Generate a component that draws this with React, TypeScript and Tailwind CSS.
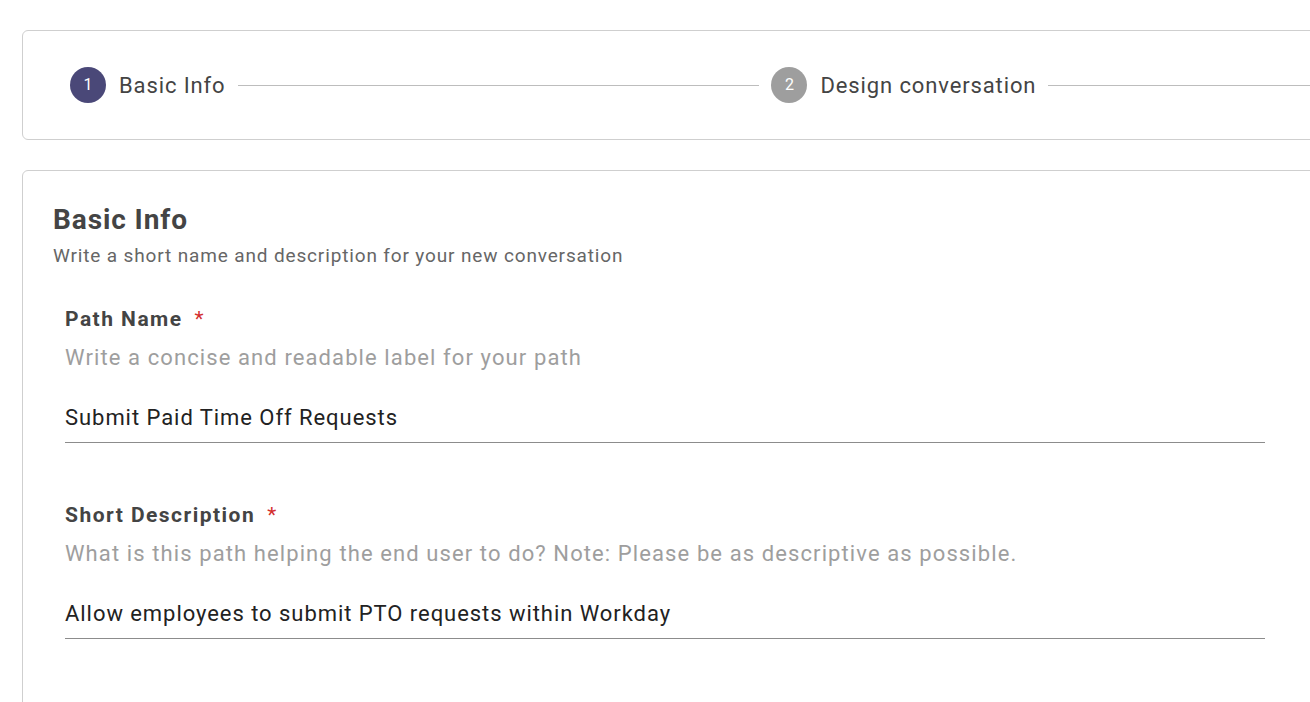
const font = { fontFamily: 'Roboto, "Liberation Sans", sans-serif' };

function Step({ n, label, active }: { n: number; label: string; active?: boolean }) {
  return (
    <div className="flex items-center shrink-0">
      <div
        className={`w-9 h-9 rounded-full flex items-center justify-center text-[16px] text-white ${
          active ? 'bg-[#4a4878]' : 'bg-[#9e9e9e]'
        }`}
      >
        {n}
      </div>
      <span className="ml-[13px] text-[22px] tracking-[0.04em] text-[#444444]">{label}</span>
    </div>
  );
}

function Field({ label, hint, value }: { label: string; hint: string; value: string }) {
  return (
    <div className="pl-3 w-[1212px]">
      <div className="flex items-center text-[21px] leading-[28px] font-bold tracking-[0.07em] text-[#444444]">
        {label}
        <span className="ml-3 text-[#d32f2f] font-normal">*</span>
      </div>
      <div className="mt-[11px] text-[22px] leading-[28px] tracking-[0.05em] text-[#9e9e9e]">{hint}</div>
      <div className="mt-8 pb-[10px] border-b border-[#8c8c8c] text-[22px] leading-[28px] tracking-[0.043em] text-[#222222]">
        {value}
      </div>
    </div>
  );
}

export default function App() {
  return (
    <div className="w-[1310px] h-[702px] overflow-hidden bg-white" style={font}>
      <div className="pt-[30px] pl-[22px] w-[1400px]">
        {/* Stepper */}
        <div className="h-[110px] border border-[#cfcfcf] rounded-[6px] flex items-center pl-[47px]">
          <Step n={1} label="Basic Info" active />
          <div className="ml-[13px] mr-[12px] w-[521px] h-px bg-[#bdbdbd]" />
          <Step n={2} label="Design conversation" />
          <div className="ml-[12px] flex-1 h-px bg-[#bdbdbd]" />
        </div>

        {/* Basic Info card */}
        <div className="mt-[30px] h-[600px] border border-[#cfcfcf] rounded-[6px] pt-8 pl-[30px]">
          <h2 className="text-[28px] leading-[34px] font-bold tracking-[0.032em] text-[#444444]">Basic Info</h2>
          <p className="mt-[7px] text-[19px] leading-[24px] tracking-[0.045em] text-[#666666]">
            Write a short name and description for your new conversation
          </p>
          <div className="mt-[37px] flex flex-col gap-[58px]">
            <Field
              label="Path Name"
              hint="Write a concise and readable label for your path"
              value="Submit Paid Time Off Requests"
            />
            <Field
              label="Short Description"
              hint="What is this path helping the end user to do? Note: Please be as descriptive as possible."
              value="Allow employees to submit PTO requests within Workday"
            />
          </div>
        </div>
      </div>
    </div>
  );
}
